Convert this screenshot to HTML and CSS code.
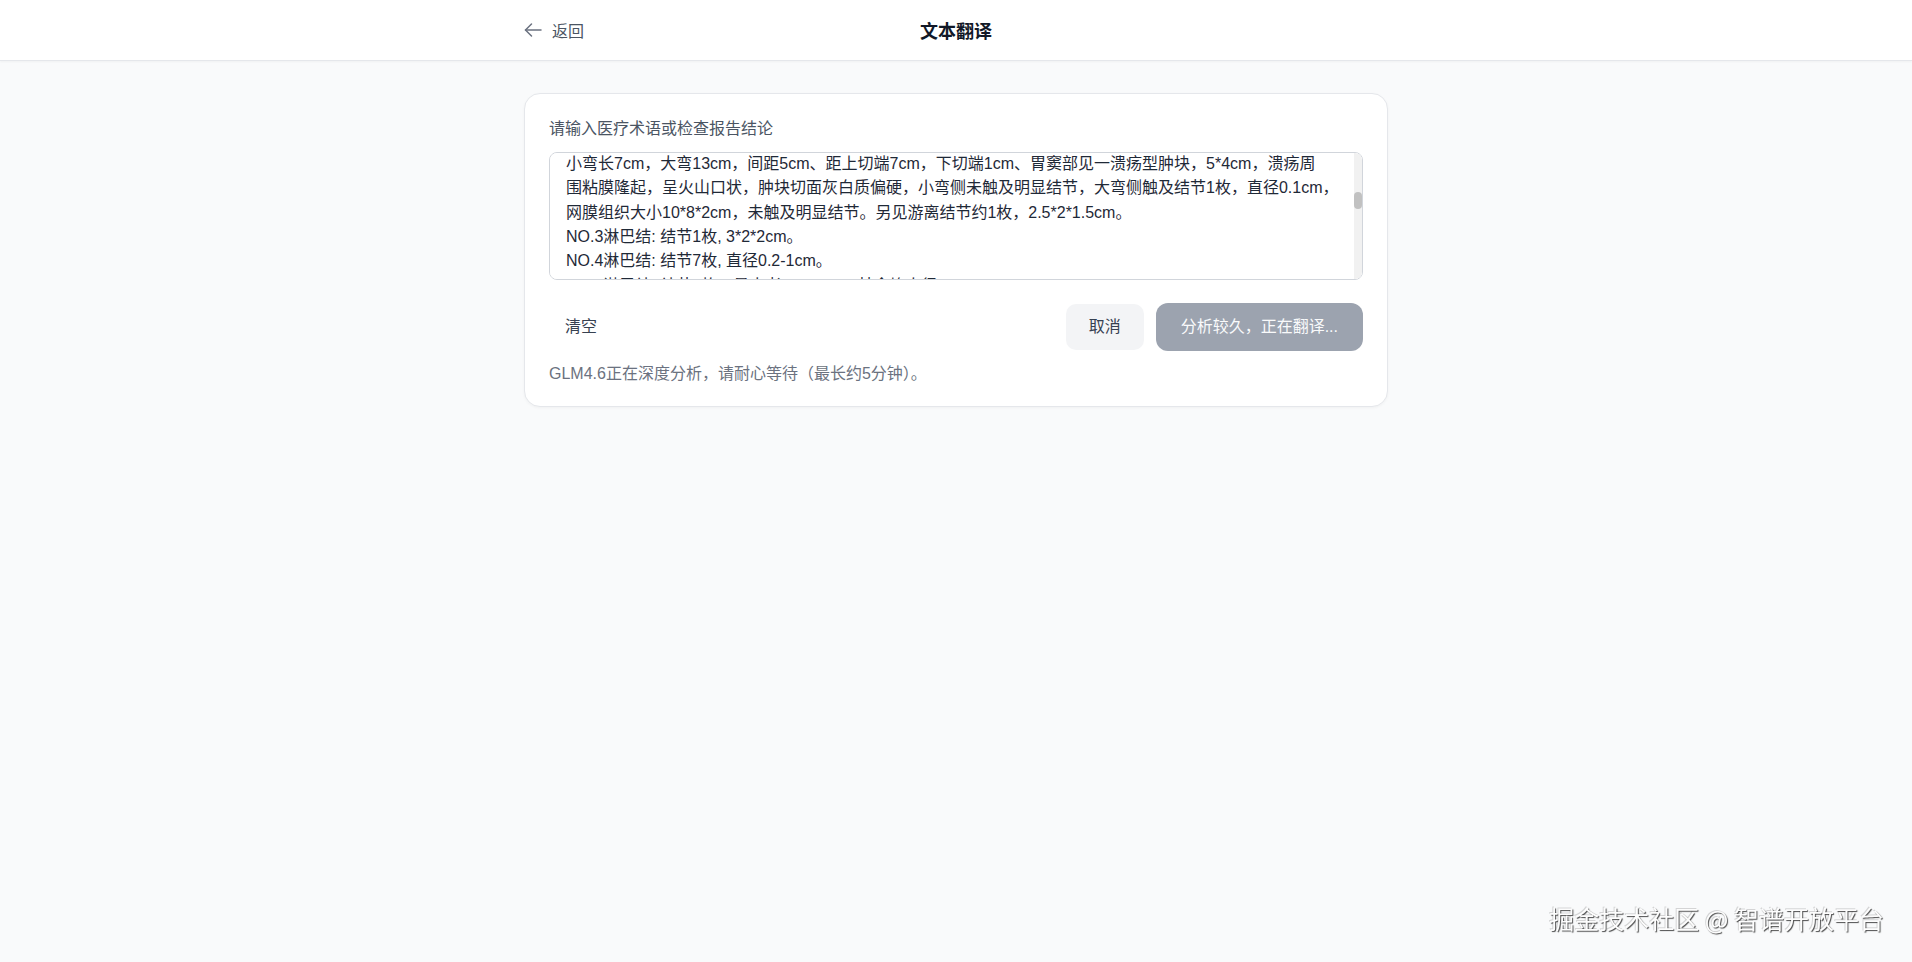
FILE: index.html
```html
<!DOCTYPE html>
<html lang="zh-CN">

<head>
    <meta charset="UTF-8">
    <title>文本翻译</title>
    <link rel="stylesheet" href="styles.css">
</head>

<body>
    <header class="topbar">
        <div class="topbar-inner">
            <button class="back-btn" type="button">
                <svg width="18" height="18" viewBox="0 0 18 18" fill="none" stroke="currentColor" stroke-width="1.5" stroke-linecap="round" stroke-linejoin="round">
                    <path d="M1.5 9H17"></path>
                    <path d="M7.5 3L1.5 9l6 6"></path>
                </svg>
                <span>返回</span>
            </button>
            <h1 class="page-title">文本翻译</h1>
            <div class="spacer"></div>
        </div>
    </header>

    <main class="main">
        <section class="card">
            <label class="field-label" for="report-input">请输入医疗术语或检查报告结论</label>
            <div class="input-wrap">
            <textarea id="report-input" class="report-input" wrap="off" spellcheck="false">病理检查报告
病理号：P2023-08652
姓名：张某某　性别：男　年龄：62岁
送检科室：胃肠外科　床号：12
标本名称：远端胃大部切除标本及区域淋巴结
临床诊断：胃窦癌
送检日期：2023-10-12

【大体所见】
（远端胃大部切除标本）
胃组织一块，已沿大弯侧剪开，
附大网膜及小网膜组织，
表面浆膜光滑，未见明显穿孔。
测量如下：
小弯长7cm，大弯13cm，间距5cm、距上切端7cm，下切端1cm、胃窦部见一溃疡型肿块，5*4cm，溃疡周
围粘膜隆起，呈火山口状，肿块切面灰白质偏硬，小弯侧未触及明显结节，大弯侧触及结节1枚，直径0.1cm，
网膜组织大小10*8*2cm，未触及明显结节。另见游离结节约1枚，2.5*2*1.5cm。
NO.3淋巴结: 结节1枚, 3*2*2cm。
NO.4淋巴结: 结节7枚, 直径0.2-1cm。
NO.6淋巴结: 结节3枚，最大者2*2*2cm，其余均直径0.1cm。
NO.7淋巴结: 结节2枚, 直径0.3-0.5cm。
NO.8淋巴结: 结节4枚, 直径0.2-0.6cm。
NO.9淋巴结: 结节1枚, 直径0.4cm。
NO.11淋巴结: 结节2枚, 直径0.2-0.3cm。
NO.12淋巴结: 结节1枚, 直径0.5cm。

【镜下所见】
肿瘤细胞呈腺管状、条索状排列，
细胞异型性明显，核分裂象易见，
部分区域可见印戒细胞，
浸润至浆膜下层，可见脉管内癌栓及神经侵犯。

【病理诊断】
（远端胃）溃疡型中-低分化腺癌，部分为印戒细胞癌，
Lauren分型：混合型；
肿瘤大小5*4cm，浸润至浆膜下层（pT3）；
可见脉管内癌栓，可见神经侵犯；
上、下切缘及网膜组织未见癌累及；
淋巴结转移情况：(3/18)
NO.3淋巴结(2/3)，NO.4淋巴结(1/7)，NO.6淋巴结(0/3)，
NO.7、8、9、11、12淋巴结均未见转移(0/5)。

【免疫组化】
CK(+), CDX-2(+), Ki-67(约60%+), HER2(1+),
MLH1(+), PMS2(+), MSH2(+), MSH6(+)。</textarea>
            </div>

            <div class="actions">
                <button class="btn btn-ghost" type="button">清空</button>
                <div class="actions-right">
                    <button class="btn btn-cancel" type="button">取消</button>
                    <button class="btn btn-primary" type="button" disabled>分析较久，正在翻译...</button>
                </div>
            </div>

            <p class="hint">GLM4.6正在深度分析，请耐心等待（最长约5分钟）。</p>
        </section>
    </main>

    <div class="watermark">掘金技术社区 @ 智谱开放平台</div>

    <script>
        // 滚动到当前正在翻译的段落
        document.getElementById("report-input").scrollTop = 353;
    </script>
</body>

</html>
```

FILE: styles.css
```css
body {
    font-family: "Liberation Sans", "Noto Sans CJK SC", sans-serif;
    background: #f9fafb;
    color: #1f2937;
    margin: 0;
    padding: 0;
    min-height: 100vh;
}

.topbar {
    background: #fff;
    border-bottom: 1px solid #e5e7eb;
    box-shadow: 0 1px 2px rgba(0, 0, 0, 0.04);
}

.topbar-inner {
    width: 864px;
    height: 60px;
    margin: 0 auto;
    display: grid;
    grid-template-columns: 1fr auto 1fr;
    align-items: center;
}

.back-btn {
    justify-self: start;
    display: flex;
    align-items: center;
    gap: 10px;
    border: none;
    background: none;
    padding: 0;
    font-family: inherit;
    font-size: 16px;
    color: #4b5563;
    cursor: pointer;
}

.back-btn svg {
    color: #6b7280;
}

.page-title {
    margin: 0;
    font-size: 18px;
    font-weight: bold;
    color: #111827;
}

.main {
    padding-top: 32px;
}

.card {
    box-sizing: border-box;
    width: 864px;
    margin: 0 auto;
    background: #fff;
    border: 1px solid #e5e7eb;
    border-radius: 16px;
    box-shadow: 0 1px 3px rgba(0, 0, 0, 0.04);
    padding: 24px 24px 20px;
}

.field-label {
    display: block;
    font-size: 16px;
    line-height: 22px;
    color: #4b5563;
    margin-bottom: 12px;
}

.input-wrap {
    position: relative;
}

/* 滚动条轨道与滑块 */
.input-wrap::before,
.input-wrap::after {
    content: "";
    position: absolute;
    right: 1px;
    width: 8px;
    pointer-events: none;
}

.input-wrap::before {
    top: 1px;
    bottom: 1px;
    background: #f1f1f1;
    border-radius: 0 7px 7px 0;
}

.input-wrap::after {
    top: 40px;
    height: 17px;
    background: #c1c1c1;
    border-radius: 4px;
}

.report-input {
    display: block;
    box-sizing: border-box;
    width: 100%;
    height: 128px;
    padding: 12px 16px;
    border: 1px solid #d1d5db;
    border-radius: 8px;
    font-family: inherit;
    font-size: 16px;
    line-height: 24.3px;
    color: #1f2937;
    resize: none;
    overflow-x: hidden;
    overflow-y: scroll;
    white-space: pre;
    outline: none;
}

.report-input::-webkit-scrollbar {
    width: 8px;
}

.report-input::-webkit-scrollbar-track {
    background: #f1f1f1;
}

.report-input::-webkit-scrollbar-thumb {
    background: #c1c1c1;
    border-radius: 4px;
}

.actions {
    display: flex;
    justify-content: space-between;
    align-items: center;
    margin-top: 23px;
}

.actions-right {
    display: flex;
    align-items: center;
    gap: 12px;
}

.btn {
    font-family: inherit;
    font-size: 16px;
    line-height: 24px;
    border: none;
    cursor: pointer;
}

.btn-ghost {
    background: none;
    color: #374151;
    padding: 12px 16px;
    border-radius: 10px;
}

.btn-cancel {
    background: #f3f4f6;
    color: #374151;
    padding: 11px 23px;
    border-radius: 10px;
}

.btn-primary {
    background: #9ca3af;
    color: #f9fafb;
    padding: 12px 25px;
    border-radius: 12px;
    cursor: not-allowed;
}

.hint {
    margin: 11px 0 0;
    font-size: 16px;
    line-height: 24px;
    color: #6b7280;
}

.watermark {
    position: fixed;
    right: 28px;
    bottom: 26px;
    font-family: "Noto Sans CJK SC", sans-serif;
    font-size: 25px;
    color: #fdfdfd;
    text-shadow: 1px 1px 1px rgba(0, 0, 0, 0.7), -1px -1px 0 rgba(0, 0, 0, 0.15);
    pointer-events: none;
}
```
